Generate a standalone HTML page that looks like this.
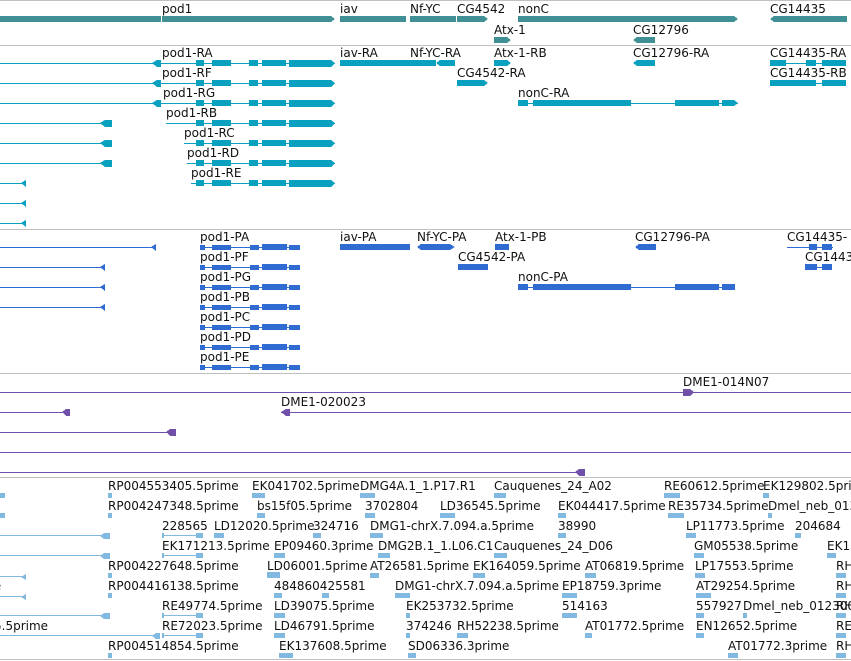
<!DOCTYPE html>
<html><head><meta charset="utf-8"><style>
html,body{margin:0;padding:0;background:#fff;width:851px;height:661px;overflow:hidden}
svg{display:block}
text{font-family:"DejaVu Sans","Liberation Sans",sans-serif;font-size:12px;fill:#111}
rect,polygon{shape-rendering:crispEdges}
</style></head><body>
<svg width="851" height="661" viewBox="0 0 851 661" xmlns="http://www.w3.org/2000/svg">
<defs>
<g id="podR" fill="#0aa0c0">
<rect x="196" y="-3" width="8" height="6"/><rect x="212" y="-3" width="19" height="6"/><rect x="249" y="-3" width="9" height="6"/><rect x="262" y="-3" width="24" height="6"/><rect x="289" y="-3" width="42" height="7"/><polygon points="331,-3 335,0 331,4"/>
</g>
<g id="podP" fill="#2f6bd0">
<rect x="200" y="-2" width="5" height="5"/><rect x="212" y="-2" width="19" height="5"/><rect x="250" y="-2" width="9" height="5"/><rect x="262" y="-3" width="25" height="6"/><rect x="289" y="-2" width="11" height="5"/>
</g>
</defs>
<g fill="#c0c0c0">
<rect x="0" y="0" width="851" height="1"/><rect x="0" y="45" width="851" height="1"/><rect x="0" y="229" width="851" height="1"/><rect x="0" y="373" width="851" height="1"/><rect x="0" y="477" width="851" height="1"/><rect x="0" y="659" width="851" height="1"/>
</g>
<g fill="#3f8f94">
<rect x="0" y="16" width="161" height="6"/><polygon points="162,16 331,16 335,19 331,22 162,22"/>
<rect x="340" y="16" width="66" height="6"/><rect x="410" y="16" width="46" height="6"/><polygon points="457,16 484,16 488,19 484,22 457,22"/>
<polygon points="518,16 734,16 738,19 734,22 518,22"/><polygon points="774,16 847,16 847,22 774,22 770,19"/>
<polygon points="494,37 507,37 511,40 507,43 494,43"/><polygon points="637,37 655,37 655,43 637,43 633,40"/>
</g>
<text x="162" y="13">pod1</text><text x="340" y="13">iav</text><text x="410" y="13">Nf-YC</text><text x="457" y="13">CG4542</text><text x="518" y="13">nonC</text><text x="770" y="13">CG14435</text>
<text x="494" y="34">Atx-1</text><text x="633" y="34">CG12796</text>
<g fill="#0aa0c0">
<rect x="0" y="63" width="162" height="1"/><rect x="162" y="63" width="173" height="1"/><polygon points="152,63 157,60 161,60 161,67 157,67"/><use href="#podR" y="63"/>
<rect x="0" y="83" width="162" height="1"/><rect x="162" y="83" width="168" height="1"/><polygon points="152,83 157,80 161,80 161,87 157,87"/><use href="#podR" y="83"/>
<rect x="0" y="103" width="335" height="1"/><polygon points="152,103 157,100 161,100 161,107 157,107"/><use href="#podR" y="103"/>
<rect x="0" y="123" width="112" height="1"/><polygon points="100,123 105,120 112,120 112,127 105,127"/><rect x="166" y="123" width="169" height="1"/><use href="#podR" y="123"/>
<rect x="0" y="143" width="112" height="1"/><polygon points="100,143 105,140 112,140 112,147 105,147"/><rect x="184" y="143" width="151" height="1"/><use href="#podR" y="143"/>
<rect x="0" y="163" width="112" height="1"/><polygon points="100,163 105,160 112,160 112,167 105,167"/><rect x="187" y="163" width="148" height="1"/><use href="#podR" y="163"/>
<rect x="0" y="183" width="26" height="1"/><polygon points="21,183 26,180 26,187"/><rect x="191" y="183" width="144" height="1"/><use href="#podR" y="183"/>
<rect x="0" y="203" width="26" height="1"/><polygon points="21,203 26,200 26,207"/>
<rect x="0" y="223" width="26" height="1"/><polygon points="21,223 26,220 26,227"/>
<rect x="340" y="60" width="66" height="6"/><rect x="406" y="60" width="30" height="6"/><polygon points="440,60 455,60 455,66 440,66 436,63"/>
<polygon points="494,60 507,60 511,63 507,66 494,66"/><polygon points="637,60 655,60 655,66 637,66 633,63"/>
<rect x="770" y="63" width="76" height="1"/><rect x="770" y="60" width="16" height="6"/><rect x="806" y="60" width="10" height="6"/><rect x="822" y="60" width="24" height="6"/>
<polygon points="457,80 484,80 488,83 484,86 457,86"/>
<rect x="770" y="83" width="76" height="1"/><rect x="770" y="80" width="38" height="6"/><rect x="808" y="80" width="8" height="6"/><rect x="822" y="80" width="24" height="6"/>
<rect x="518" y="103" width="220" height="1"/><rect x="518" y="100" width="10" height="6"/><rect x="533" y="100" width="98" height="6"/><rect x="675" y="100" width="44" height="6"/><rect x="722" y="100" width="12" height="6"/><polygon points="734,100 738,103 734,106"/>
</g>
<text x="162" y="57">pod1-RA</text><text x="340" y="57">iav-RA</text><text x="410" y="57">Nf-YC-RA</text><text x="494" y="57">Atx-1-RB</text><text x="633" y="57">CG12796-RA</text><text x="770" y="57">CG14435-RA</text>
<text x="162" y="77">pod1-RF</text><text x="457" y="77">CG4542-RA</text><text x="770" y="77">CG14435-RB</text>
<text x="163" y="97">pod1-RG</text><text x="518" y="97">nonC-RA</text>
<text x="166" y="117">pod1-RB</text><text x="184" y="137">pod1-RC</text><text x="187" y="157">pod1-RD</text><text x="191" y="177">pod1-RE</text>
<g fill="#2f6bd0">
<rect x="0" y="247" width="156" height="1"/><polygon points="151,247 156,244 156,251"/>
<rect x="0" y="267" width="105" height="1"/><polygon points="100,267 105,264 105,271"/>
<rect x="0" y="287" width="105" height="1"/><polygon points="100,287 105,284 105,291"/>
<rect x="0" y="307" width="105" height="1"/><polygon points="100,307 105,304 105,311"/>
<rect x="200" y="247" width="100" height="1"/><use href="#podP" y="247"/>
<rect x="200" y="267" width="100" height="1"/><use href="#podP" y="267"/>
<rect x="200" y="287" width="100" height="1"/><use href="#podP" y="287"/>
<rect x="200" y="307" width="100" height="1"/><use href="#podP" y="307"/>
<rect x="200" y="327" width="100" height="1"/><use href="#podP" y="327"/>
<rect x="200" y="347" width="100" height="1"/><use href="#podP" y="347"/>
<rect x="200" y="367" width="100" height="1"/><use href="#podP" y="367"/>
<rect x="340" y="244" width="70" height="6"/><polygon points="421,244 450,244 455,247 450,250 421,250 417,247"/>
<rect x="495" y="244" width="14" height="6"/><polygon points="639,244 656,244 656,250 639,250 635,247"/>
<rect x="787" y="247" width="46" height="1"/><rect x="809" y="244" width="8" height="6"/><rect x="822" y="244" width="10" height="6"/>
<rect x="458" y="264" width="30" height="6"/>
<rect x="805" y="267" width="27" height="1"/><rect x="805" y="264" width="12" height="6"/><rect x="822" y="264" width="10" height="6"/>
<rect x="518" y="287" width="217" height="1"/><rect x="518" y="284" width="10" height="6"/><rect x="533" y="284" width="98" height="6"/><rect x="675" y="284" width="44" height="6"/><rect x="722" y="284" width="13" height="6"/>
</g>
<text x="200" y="241">pod1-PA</text><text x="340" y="241">iav-PA</text><text x="417" y="241">Nf-YC-PA</text><text x="495" y="241">Atx-1-PB</text><text x="635" y="241">CG12796-PA</text><text x="787" y="241">CG14435-</text>
<text x="200" y="261">pod1-PF</text><text x="458" y="261">CG4542-PA</text><text x="805" y="261">CG1443</text>
<text x="200" y="281">pod1-PG</text><text x="518" y="281">nonC-PA</text>
<text x="200" y="301">pod1-PB</text><text x="200" y="321">pod1-PC</text><text x="200" y="341">pod1-PD</text><text x="200" y="361">pod1-PE</text>
<g fill="#7050a8">
<rect x="0" y="392" width="851" height="1"/><polygon points="683,389 690,389 694,392 690,396 683,396"/>
<rect x="0" y="412" width="70" height="1"/><polygon points="62,412 66,409 70,409 70,416 66,416"/>
<rect x="281" y="412" width="570" height="1"/><polygon points="281,412 286,409 290,409 290,416 286,416"/>
<rect x="0" y="432" width="176" height="1"/><polygon points="166,432 170,429 176,429 176,436 170,436"/>
<rect x="0" y="452" width="851" height="1"/>
<rect x="0" y="472" width="585" height="1"/><polygon points="575,472 579,469 585,469 585,476 579,476"/>
</g>
<text x="683" y="386">DME1-014N07</text><text x="281" y="406">DME1-020023</text>
<g fill="#82b9e0">
<rect x="0" y="493" width="5" height="5"/><rect x="0" y="513" width="5" height="5"/>
<rect x="0" y="535" width="110" height="1"/><polygon points="100,536 104,533 110,533 110,539 104,539"/>
<rect x="0" y="555" width="110" height="1"/><polygon points="100,556 104,553 110,553 110,559 104,559"/>
<rect x="0" y="576" width="26" height="1"/><polygon points="21,577 26,574 26,580"/>
<rect x="0" y="596" width="26" height="1"/><polygon points="21,597 26,594 26,600"/>
<rect x="0" y="615" width="110" height="1"/><polygon points="100,616 104,613 110,613 110,619 104,619"/>
<rect x="0" y="635" width="160" height="1"/><polygon points="152,636 156,633 160,633 160,639 156,639"/>
<rect x="162" y="535" width="41" height="1"/><rect x="162" y="555" width="41" height="1"/><rect x="162" y="615" width="41" height="1"/><rect x="162" y="635" width="41" height="1"/>
<rect x="196" y="533" width="7" height="5"/><rect x="196" y="553" width="7" height="5"/><rect x="196" y="613" width="7" height="5"/><rect x="196" y="633" width="7" height="5"/>
<rect x="162" y="533" width="2" height="5"/><rect x="162" y="553" width="2" height="5"/><rect x="162" y="613" width="2" height="5"/><rect x="162" y="633" width="2" height="5"/>
<rect x="108" y="493" width="4" height="5"/><rect x="252" y="493" width="13" height="5"/><rect x="360" y="493" width="15" height="5"/><rect x="494" y="493" width="12" height="5"/><rect x="664" y="493" width="16" height="5"/><rect x="763" y="493" width="6" height="5"/>
<rect x="108" y="513" width="4" height="5"/><rect x="257" y="513" width="8" height="5"/><rect x="365" y="513" width="10" height="5"/><rect x="440" y="513" width="15" height="5"/><rect x="558" y="513" width="8" height="5"/><rect x="668" y="513" width="16" height="5"/><rect x="768" y="513" width="4" height="5"/>
<rect x="214" y="533" width="10" height="5"/><rect x="313" y="533" width="8" height="5"/><rect x="370" y="533" width="13" height="5"/><rect x="558" y="533" width="8" height="5"/><rect x="686" y="533" width="10" height="5"/><rect x="795" y="533" width="6" height="5"/>
<rect x="274" y="553" width="11" height="5"/><rect x="378" y="553" width="12" height="5"/><rect x="494" y="553" width="13" height="5"/><rect x="694" y="553" width="10" height="5"/><rect x="827" y="553" width="9" height="5"/>
<rect x="108" y="573" width="4" height="5"/><rect x="267" y="572" width="13" height="6"/><rect x="370" y="573" width="9" height="5"/><rect x="473" y="573" width="12" height="5"/><rect x="585" y="573" width="11" height="5"/><rect x="695" y="573" width="10" height="5"/><rect x="836" y="573" width="10" height="5"/>
<rect x="108" y="593" width="4" height="5"/><rect x="274" y="593" width="8" height="5"/><rect x="322" y="593" width="7" height="5"/><rect x="395" y="593" width="15" height="5"/><rect x="562" y="593" width="15" height="5"/><rect x="696" y="593" width="15" height="5"/><rect x="836" y="593" width="10" height="5"/>
<rect x="274" y="613" width="11" height="5"/><rect x="406" y="613" width="4" height="5"/><rect x="562" y="613" width="15" height="5"/><rect x="696" y="613" width="8" height="5"/><rect x="743" y="613" width="4" height="5"/><rect x="836" y="613" width="10" height="5"/>
<rect x="274" y="633" width="11" height="5"/><rect x="406" y="633" width="4" height="5"/><rect x="457" y="633" width="11" height="5"/><rect x="585" y="633" width="7" height="5"/><rect x="696" y="633" width="8" height="5"/><rect x="836" y="633" width="10" height="5"/>
<rect x="108" y="653" width="4" height="5"/><rect x="279" y="653" width="14" height="5"/><rect x="408" y="653" width="8" height="5"/><rect x="728" y="653" width="10" height="5"/><rect x="836" y="653" width="10" height="5"/>
</g>
<text x="108" y="490">RP004553405.5prime</text><text x="252" y="490">EK041702.5prime</text><text x="360" y="490">DMG4A.1_1.P17.R1</text><text x="494" y="490">Cauquenes_24_A02</text><text x="664" y="490">RE60612.5prime</text><text x="763" y="490">EK129802.5prime</text>
<text x="108" y="510">RP004247348.5prime</text><text x="257" y="510">bs15f05.5prime</text><text x="365" y="510">3702804</text><text x="440" y="510">LD36545.5prime</text><text x="558" y="510">EK044417.5prime</text><text x="668" y="510">RE35734.5prime</text><text x="768" y="510">Dmel_neb_013</text>
<text x="-7" y="530">e</text><text x="162" y="530">228565</text><text x="214" y="530">LD12020.5prime</text><text x="313" y="530">324716</text><text x="370" y="530">DMG1-chrX.7.094.a.5prime</text><text x="558" y="530">38990</text><text x="686" y="530">LP11773.5prime</text><text x="795" y="530">204684</text>
<text x="-7" y="550">e</text><text x="162" y="550">EK171213.5prime</text><text x="274" y="550">EP09460.3prime</text><text x="378" y="550">DMG2B.1_1.L06.C1</text><text x="494" y="550">Cauquenes_24_D06</text><text x="694" y="550">GM05538.5prime</text><text x="827" y="550">EK1</text>
<text x="108" y="570">RP004227648.5prime</text><text x="267" y="570">LD06001.5prime</text><text x="370" y="570">AT26581.5prime</text><text x="473" y="570">EK164059.5prime</text><text x="585" y="570">AT06819.5prime</text><text x="695" y="570">LP17553.5prime</text><text x="836" y="570">RH</text>
<text x="-18" y="590">me</text><text x="108" y="590">RP004416138.5prime</text><text x="274" y="590">484860425581</text><text x="395" y="590">DMG1-chrX.7.094.a.5prime</text><text x="562" y="590">EP18759.3prime</text><text x="696" y="590">AT29254.5prime</text><text x="836" y="590">RH</text>
<text x="-7" y="610">e</text><text x="162" y="610">RE49774.5prime</text><text x="274" y="610">LD39075.5prime</text><text x="406" y="610">EK253732.5prime</text><text x="562" y="610">514163</text><text x="696" y="610">557927</text><text x="743" y="610">Dmel_neb_012300</text><text x="836" y="610">RH</text>
<text x="-6" y="630">5.5prime</text><text x="162" y="630">RE72023.5prime</text><text x="274" y="630">LD46791.5prime</text><text x="406" y="630">374246</text><text x="457" y="630">RH52238.5prime</text><text x="585" y="630">AT01772.5prime</text><text x="696" y="630">EN12652.5prime</text><text x="836" y="630">RE</text>
<text x="108" y="650">RP004514854.5prime</text><text x="279" y="650">EK137608.5prime</text><text x="408" y="650">SD06336.3prime</text><text x="728" y="650">AT01772.3prime</text><text x="836" y="650">RH</text>
</svg>
</body></html>
